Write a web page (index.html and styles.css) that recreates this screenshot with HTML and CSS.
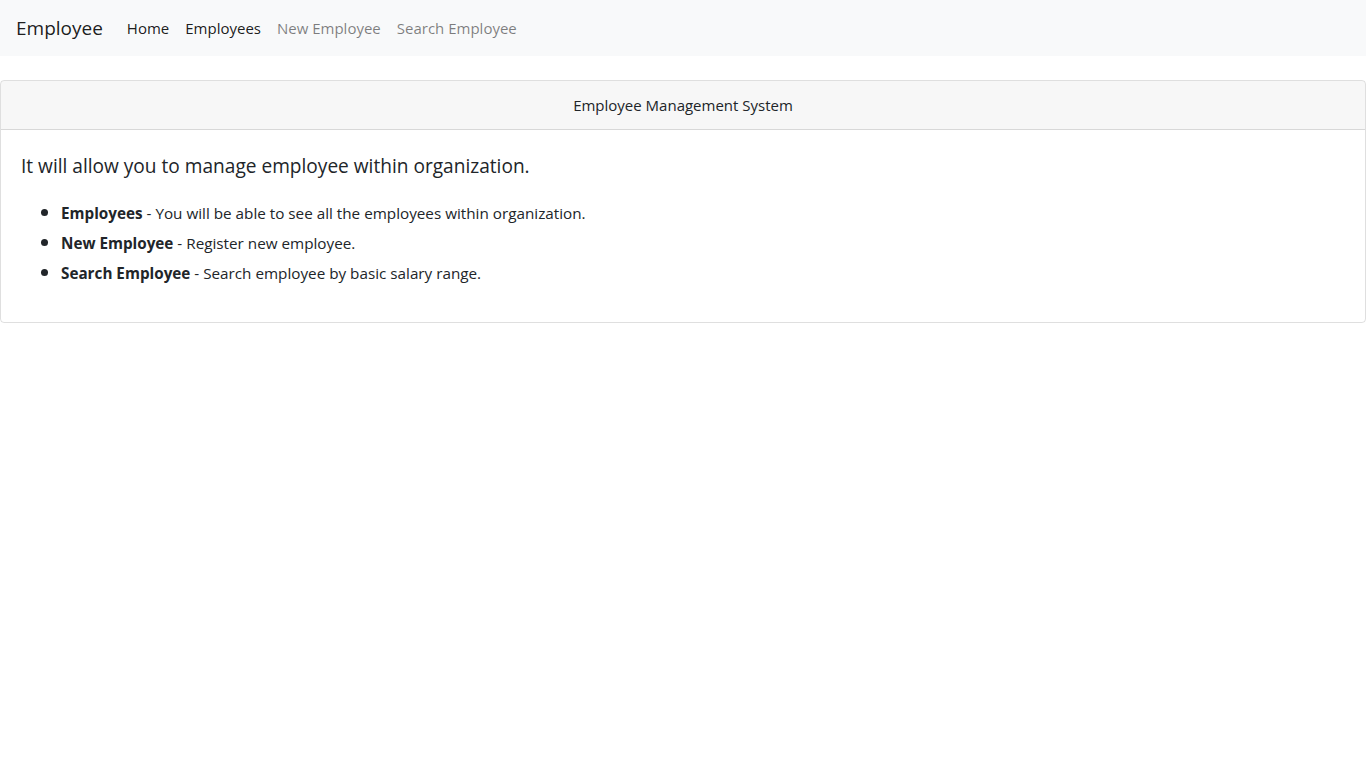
FILE: index.html
```html
<!DOCTYPE html>
<html lang="en">
<head>
<meta charset="utf-8">
<title>Employee</title>
<link rel="stylesheet" href="styles.css">
</head>
<body>
<nav class="navbar">
  <a class="brand" href="#">Employee</a>
  <ul class="nav">
    <li><a class="nav-link active" href="#">Home</a></li>
    <li><a class="nav-link active" href="#">Employees</a></li>
    <li><a class="nav-link" href="#">New Employee</a></li>
    <li><a class="nav-link" href="#">Search Employee</a></li>
  </ul>
</nav>
<main class="main">
  <section class="card">
    <div class="card-header">Employee Management System</div>
    <div class="card-body">
      <p class="intro">It will allow you to manage employee within organization.</p>
      <ul class="features">
        <li><b>Employees</b> - You will be able to see all the employees within organization.</li>
        <li><b>New Employee</b> - Register new employee.</li>
        <li><b>Search Employee</b> - Search employee by basic salary range.</li>
      </ul>
    </div>
  </section>
</main>
</body>
</html>
```
FILE: styles.css
```css
* { box-sizing: border-box; }
html, body { margin: 0; padding: 0; }
body {
  font-family: "Open Sans", "Noto Sans", "Liberation Sans", sans-serif;
  font-size: 15px;
  line-height: 1.5;
  color: #212529;
  background: #fff;
}
a { text-decoration: none; }
.navbar {
  display: flex;
  align-items: center;
  height: 56px;
  padding: 8px 16px;
  background: #f8f9fa;
}
.brand {
  font-size: 19px;
  line-height: 30px;
  color: rgba(0,0,0,.9);
  margin-right: 16px;
}
.nav {
  display: flex;
  list-style: none;
  margin: 0;
  padding: 0;
}
.nav-link {
  display: block;
  padding: 8px;
  color: rgba(0,0,0,.5);
}
.nav-link.active { color: rgba(0,0,0,.9); }
.main { padding-top: 24px; }
.card {
  border: 1px solid rgba(0,0,0,.125);
  border-radius: 4px;
  overflow: hidden;
}
.card-header {
  padding: 12px 20px;
  line-height: 24px;
  text-align: center;
  background: rgba(0,0,0,.03);
  border-bottom: 1px solid rgba(0,0,0,.125);
}
.card-body { padding: 20px; }
.intro {
  margin: 0 0 16px;
  font-size: 19.1px;
  line-height: 30px;
  padding-top: 1px;
}
.features {
  margin: 0 0 15px;
  padding-left: 40px;
  font-size: 15.25px;
}
.features li { line-height: 30px; height: 30px; }
.features li::marker { font-size: 19px; }
.features b { font-weight: 700; }
```
